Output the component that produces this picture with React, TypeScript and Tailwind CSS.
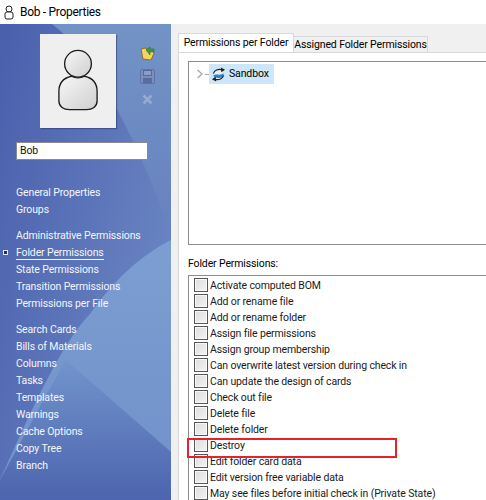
const NAV_GROUPS = [
  ["General Properties", "Groups"],
  ["Administrative Permissions", "Folder Permissions", "State Permissions", "Transition Permissions", "Permissions per File"],
  ["Search Cards", "Bills of Materials", "Columns", "Tasks", "Templates", "Warnings", "Cache Options", "Copy Tree", "Branch"],
];

const PERMISSIONS = [
  "Activate computed BOM",
  "Add or rename file",
  "Add or rename folder",
  "Assign file permissions",
  "Assign group membership",
  "Can overwrite latest version during check in",
  "Can update the design of cards",
  "Check out file",
  "Delete file",
  "Delete folder",
  "Destroy",
  "Edit folder card data",
  "Edit version free variable data",
  "May see files before initial check in (Private State)",
];

function SidebarBackdrop() {
  return (
    <svg className="absolute inset-0 h-full w-full" viewBox="0 0 171 476" preserveAspectRatio="none">
      <defs>
        <linearGradient id="base" x1="0" y1="0" x2="1" y2="0.6">
          <stop offset="0" stopColor="#4a5fad" />
          <stop offset="1" stopColor="#6a86c2" />
        </linearGradient>
        <linearGradient id="topSweep" x1="0" y1="0" x2="0" y2="1">
          <stop offset="0" stopColor="#7393c6" />
          <stop offset="1" stopColor="#6682bf" />
        </linearGradient>
        <linearGradient id="sweep" x1="0" y1="0" x2="0" y2="1">
          <stop offset="0" stopColor="#7c9ed1" />
          <stop offset="1" stopColor="#6f90ca" />
        </linearGradient>
        <linearGradient id="foot" x1="0" y1="0" x2="0" y2="1">
          <stop offset="0" stopColor="#7294cc" />
          <stop offset="1" stopColor="#4c64ae" />
        </linearGradient>
      </defs>
      <rect width="171" height="476" fill="url(#base)" />
      <path d="M52 0 L171 0 L171 210 C150 150 105 40 52 0Z" fill="url(#topSweep)" />
      <path d="M0 456 C25 400 60 320 90 290 C115 255 140 232 171 216 L171 476 L0 476Z" fill="url(#sweep)" />
      <path d="M66 336 L171 428 L171 476 L0 476 L0 456 C20 420 45 372 66 336Z" fill="url(#foot)" />
    </svg>
  );
}

function Avatar() {
  return (
    <div className="flex h-[94px] w-[76px] items-center justify-center bg-[#efefef] shadow-[1px_1px_1px_rgba(40,50,100,0.5)]">
      <svg width="42" height="64" viewBox="0 0 44 66">
        <defs>
          <linearGradient id="skin" x1="0" y1="0" x2="1" y2="1">
            <stop offset="0" stopColor="#f7f7f7" />
            <stop offset="1" stopColor="#cfcfcf" />
          </linearGradient>
        </defs>
        <circle cx="22" cy="15" r="14" fill="url(#skin)" stroke="#1c1c1c" strokeWidth="1.4" />
        <path d="M15 28 C6 30 2 36 2 44 L2 54 C2 60 7 63 13 63 L31 63 C37 63 42 60 42 54 L42 44 C42 36 38 30 29 28 C25 30 19 30 15 28Z" fill="url(#skin)" stroke="#1c1c1c" strokeWidth="1.4" />
      </svg>
    </div>
  );
}

function SideIcons() {
  return (
    <div className="flex flex-col items-center gap-[8px]">
      <svg width="15" height="15" viewBox="0 0 15 15">
        <path d="M1 3 L6 2 L7 4 L12 4 L14 7 L11 14 L3 13Z" fill="#f5d45e" stroke="#7a6220" strokeWidth="0.8" />
        <path d="M6 4 L10 1 L10 3 L14 3 L14 6 L10 6 L10 9Z" fill="#3f9a3a" stroke="#1f6a24" strokeWidth="0.5" />
      </svg>
      <svg width="15" height="15" viewBox="0 0 15 15">
        <rect x="0.5" y="0.5" width="14" height="14" rx="1.5" fill="#7c8fbc" stroke="#5f72a6" />
        <rect x="3.5" y="1.5" width="8" height="5" fill="#8b9dc6" stroke="#566a9e" />
        <rect x="3" y="9" width="9" height="5" fill="#596ca2" />
      </svg>
      <svg width="15" height="15" viewBox="0 0 15 15">
        <path d="M3.5 3.5 L11.5 11.5 M11.5 3.5 L3.5 11.5" stroke="#9aa9cf" strokeWidth="2.6" />
      </svg>
    </div>
  );
}

function FolderSyncIcon() {
  return (
    <svg width="15" height="15" viewBox="0 0 16 16" className="shrink-0">
      <circle cx="8" cy="8" r="5.5" fill="#e4eff8" />
      <path d="M2.5 9 C5.5 6.5 10 10 13.5 6.5 L13 10 C10 12.5 6 12 3.5 11Z" fill="#2b86c9" />
      <path d="M2.5 7 C3.5 3.5 7.5 1.5 12 3" fill="none" stroke="#1d1d1d" strokeWidth="1.2" />
      <path d="M13.5 9 C12.5 12.5 8.5 14.5 4 13" fill="none" stroke="#1d1d1d" strokeWidth="1.2" />
      <path d="M10.5 0.5 L15 3 L11 5.5Z M5.5 15.5 L1 13 L5 10.5Z" fill="#1d1d1d" />
    </svg>
  );
}

function PermissionRow({ label }: { label: string }) {
  return (
    <div className="flex h-4 items-center">
      <span className="h-[14px] w-[14px] shrink-0 border border-[#555] bg-gradient-to-br from-[#dedede] to-[#f2f2f2] shadow-[inset_0_0_0_1px_#f8f8f8]" />
      <span className="ml-[2px] whitespace-nowrap pt-[2px]">{label}</span>
    </div>
  );
}

export default function App() {
  return (
    <div className="flex h-[500px] w-[486px] flex-col overflow-hidden bg-white font-['Roboto',sans-serif] text-[10.5px] tracking-[-0.13px] text-[#1a1a1a]">
      <div className="flex h-[24px] shrink-0 items-center gap-[6px] pl-[4px] text-[12px] tracking-[-0.3px] text-black">
        <svg width="10" height="15" viewBox="0 0 10 15">
          <circle cx="5" cy="4" r="3" fill="#fff" stroke="#222" />
          <rect x="1" y="7" width="8" height="7" rx="2" fill="#fff" stroke="#222" />
        </svg>
        <span>Bob - Properties</span>
      </div>
      <div className="flex min-h-0 flex-1">
        <aside className="relative w-[171px] shrink-0 overflow-hidden text-[#f2f5fb]">
          <SidebarBackdrop />
          <div className="relative flex flex-col pl-[16px] pt-[10px]">
            <div className="flex items-start">
              <div className="ml-[24px]">
                <Avatar />
              </div>
              <div className="ml-[24px] mt-[12px]">
                <SideIcons />
              </div>
            </div>
            <div className="mt-[14px] flex h-[18px] w-[132px] items-center border border-[#8a8a8a] bg-white pl-[3px] text-[#111]">Bob</div>
            <nav className="mt-[24px] flex flex-col gap-[9px]">
              {NAV_GROUPS.map((group, i) => (
                <div key={i} className="flex flex-col">
                  {group.map((item) => (
                    <div key={item} className="relative flex h-[17px] items-center whitespace-nowrap">
                      {item === "Folder Permissions" && (
                        <span className="absolute left-[-13px] top-[6px] h-[5px] w-[5px] border border-[#dfe6f4] bg-[#2a2f55]" />
                      )}
                      <span className={item === "Folder Permissions" ? "border-b border-[#f2f5fb] leading-[13px]" : ""}>{item}</span>
                    </div>
                  ))}
                </div>
              ))}
            </nav>
          </div>
        </aside>
        <main className="relative min-w-0 flex-1 bg-[#f0f0f0] pl-[7px] pt-[9px]">
          <div className="flex h-[19px] items-end whitespace-nowrap">
            <div className="flex h-[19px] w-[116px] items-center justify-center border border-b-0 border-[#d9d9d9] bg-white text-black">Permissions per Folder</div>
            <div className="flex h-[16px] w-[134px] items-center justify-center border border-b-0 border-l-0 border-[#d9d9d9] bg-[#f0f0f0] text-black">Assigned Folder Permissions</div>
          </div>
          <div className="flex h-[500px] flex-col border-l border-t border-[#d9d9d9] bg-white pl-[9px] pt-[8px]">
            <div className="h-[184px] border border-r-0 border-[#8c8c8c] bg-white">
              <div className="flex items-center pl-[7px] pt-[2px]">
                <svg width="8" height="10" viewBox="0 0 8 10">
                  <path d="M1.5 1 L6 5 L1.5 9" fill="none" stroke="#a8a8a8" strokeWidth="1.3" />
                </svg>
                <span className="ml-[1px] h-px w-[4px] bg-[#aaa]" />
                <div className="flex h-[20px] w-[65px] items-center gap-[3px] bg-[#cde6f9] pl-[2px] text-black">
                  <FolderSyncIcon />
                  <span>Sandbox</span>
                </div>
              </div>
            </div>
            <div className="mb-[4px] mt-[12px] leading-[14px] text-black">Folder Permissions:</div>
            <div className="flex-1 border border-r-0 border-[#8c8c8c] bg-white pl-[5px] pt-[1px]">
              {PERMISSIONS.map((p) => (
                <PermissionRow key={p} label={p} />
              ))}
            </div>
          </div>
          <div className="absolute left-[16px] top-[414px] h-[20px] w-[210px] border-2 border-[#e8202a]" />
        </main>
      </div>
    </div>
  );
}
